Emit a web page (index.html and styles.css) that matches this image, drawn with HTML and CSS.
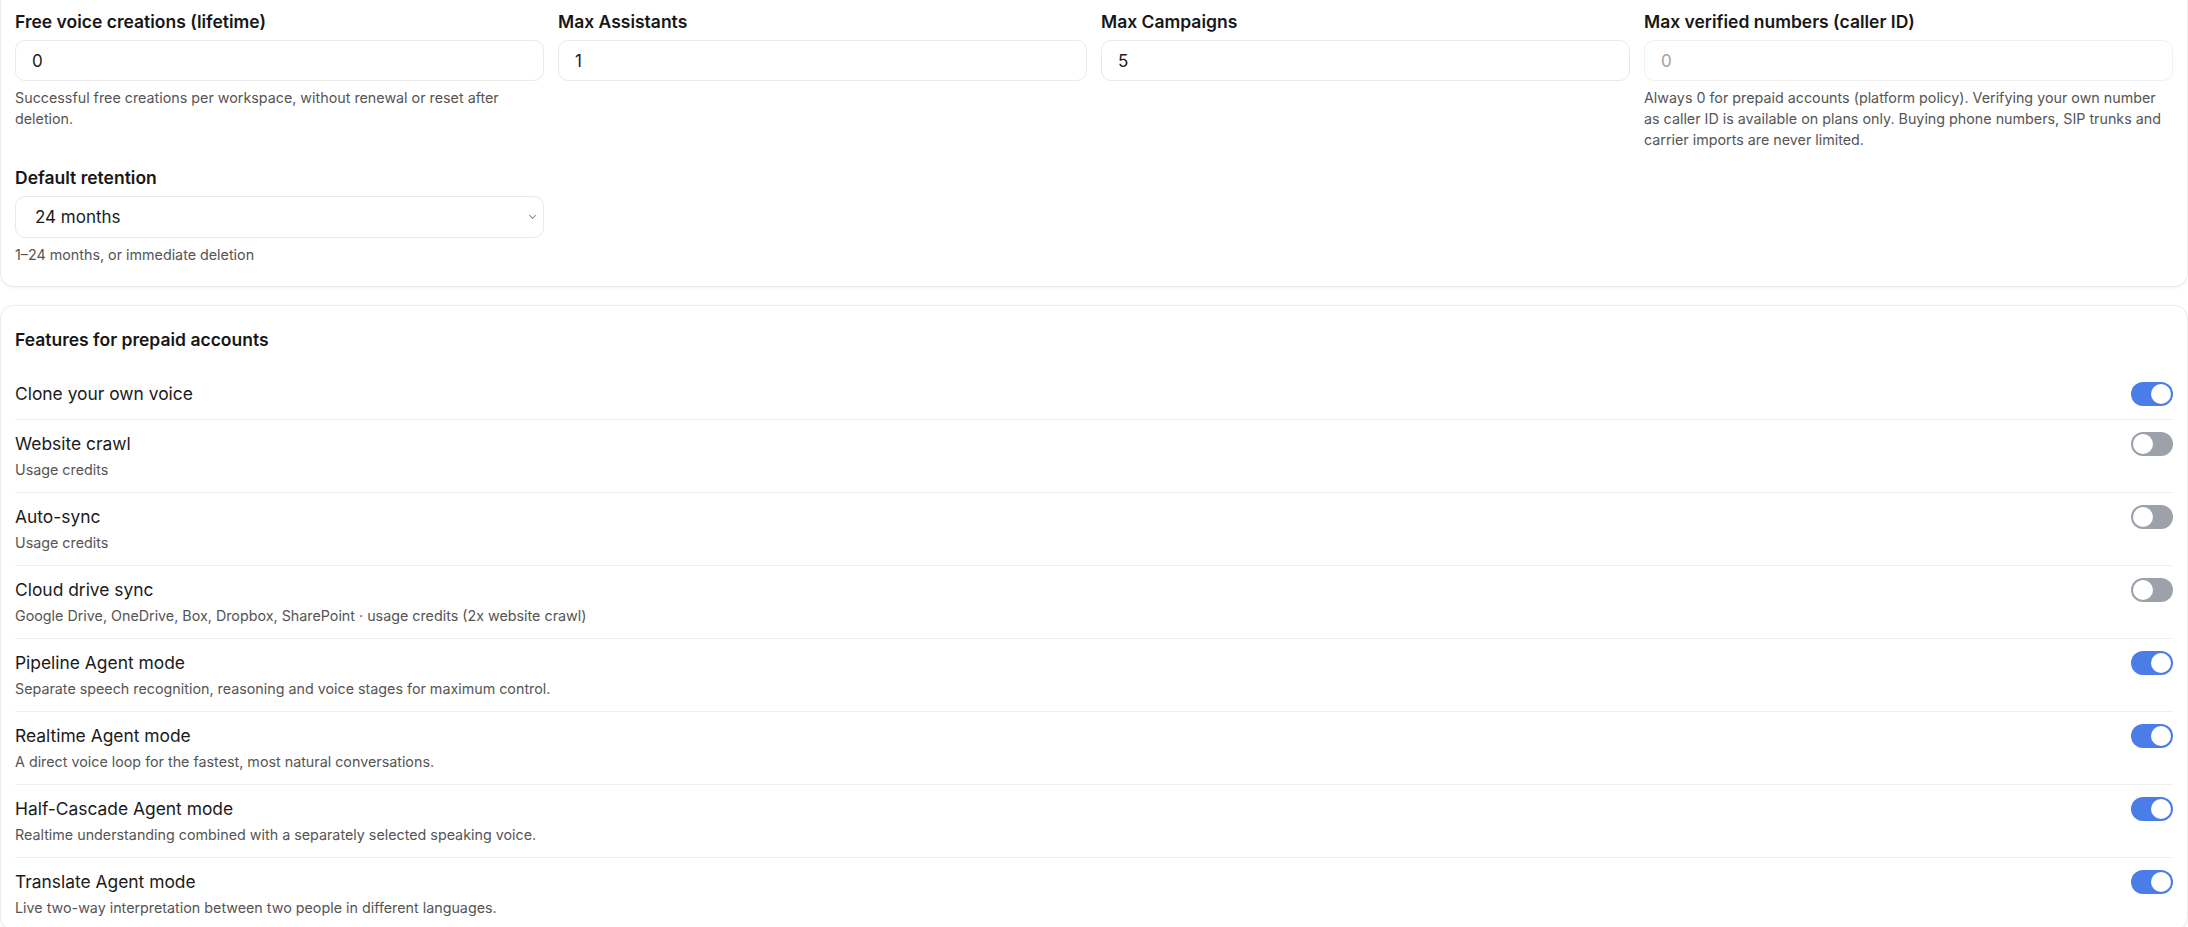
FILE: index.html
```html
<!DOCTYPE html>
<html lang="en">
<head>
  <meta charset="UTF-8">
  <meta name="viewport" content="width=device-width, initial-scale=1.0">
  <link rel="stylesheet" href="styles.css">
  <title>Prepaid account limits</title>
</head>
<body>

<main class="page">

  <section class="card card-limits">
    <div class="limits-grid">
      <div class="field">
        <label class="field-label" for="freeVoices">Free voice creations (lifetime)</label>
        <input class="field-input" type="number" id="freeVoices" value="0">
        <p class="field-help">Successful free creations per workspace, without renewal or reset after deletion.</p>
      </div>

      <div class="field">
        <label class="field-label" for="maxAssistants">Max Assistants</label>
        <input class="field-input" type="number" id="maxAssistants" value="1">
      </div>

      <div class="field">
        <label class="field-label" for="maxCampaigns">Max Campaigns</label>
        <input class="field-input" type="number" id="maxCampaigns" value="5">
      </div>

      <div class="field">
        <label class="field-label" for="maxCallerIds">Max verified numbers (caller ID)</label>
        <input class="field-input" type="number" id="maxCallerIds" value="0" disabled>
        <p class="field-help">Always 0 for prepaid accounts (platform policy). Verifying your own number as caller ID is available on plans only. Buying phone numbers, SIP trunks and carrier imports are never limited.</p>
      </div>

      <div class="field">
        <label class="field-label" for="retention">Default retention</label>
        <div class="select-wrap">
          <select class="field-input field-select" id="retention">
            <option>Immediate deletion</option>
            <option>1 month</option>
            <option>3 months</option>
            <option>6 months</option>
            <option>12 months</option>
            <option selected>24 months</option>
          </select>
        </div>
        <p class="field-help">1–24 months, or immediate deletion</p>
      </div>
    </div>
  </section>

  <section class="card card-features">
    <h2 class="card-title">Features for prepaid accounts</h2>

    <ul class="feature-list">
      <li class="feature-row">
        <div class="feature-text">
          <span class="feature-name">Clone your own voice</span>
        </div>
        <label class="switch"><input type="checkbox" checked><span class="switch-track"></span></label>
      </li>
      <li class="feature-row">
        <div class="feature-text">
          <span class="feature-name">Website crawl</span>
          <span class="feature-note">Usage credits</span>
        </div>
        <label class="switch"><input type="checkbox"><span class="switch-track"></span></label>
      </li>
      <li class="feature-row">
        <div class="feature-text">
          <span class="feature-name">Auto-sync</span>
          <span class="feature-note">Usage credits</span>
        </div>
        <label class="switch"><input type="checkbox"><span class="switch-track"></span></label>
      </li>
      <li class="feature-row">
        <div class="feature-text">
          <span class="feature-name">Cloud drive sync</span>
          <span class="feature-note">Google Drive, OneDrive, Box, Dropbox, SharePoint · usage credits (2x website crawl)</span>
        </div>
        <label class="switch"><input type="checkbox"><span class="switch-track"></span></label>
      </li>
      <li class="feature-row">
        <div class="feature-text">
          <span class="feature-name">Pipeline Agent mode</span>
          <span class="feature-note">Separate speech recognition, reasoning and voice stages for maximum control.</span>
        </div>
        <label class="switch"><input type="checkbox" checked><span class="switch-track"></span></label>
      </li>
      <li class="feature-row">
        <div class="feature-text">
          <span class="feature-name">Realtime Agent mode</span>
          <span class="feature-note">A direct voice loop for the fastest, most natural conversations.</span>
        </div>
        <label class="switch"><input type="checkbox" checked><span class="switch-track"></span></label>
      </li>
      <li class="feature-row">
        <div class="feature-text">
          <span class="feature-name">Half-Cascade Agent mode</span>
          <span class="feature-note">Realtime understanding combined with a separately selected speaking voice.</span>
        </div>
        <label class="switch"><input type="checkbox" checked><span class="switch-track"></span></label>
      </li>
      <li class="feature-row">
        <div class="feature-text">
          <span class="feature-name">Translate Agent mode</span>
          <span class="feature-note">Live two-way interpretation between two people in different languages.</span>
        </div>
        <label class="switch"><input type="checkbox" checked><span class="switch-track"></span></label>
      </li>
    </ul>
  </section>

</main>

</body>
</html>
```

FILE: styles.css
```css
body {
  margin: 0;
  font-family: 'Inter', 'Noto Sans', sans-serif;
  background-color: #fff;
  color: #1b1b1b;
}

.page {
  display: flex;
  flex-direction: column;
  gap: 18px;
}

.card {
  background-color: #fff;
  border: 1px solid #ececec;
  border-radius: 14px;
  box-shadow: 0 1px 3px rgba(0, 0, 0, 0.05);
  padding: 0 14px;
}

.card-limits {
  border-top: none;
  border-radius: 0 0 14px 14px;
  padding-top: 10px;
  padding-bottom: 21px;
}

.limits-grid {
  display: grid;
  grid-template-columns: repeat(4, 1fr);
  column-gap: 14px;
  row-gap: 16px;
}

.field {
  display: flex;
  flex-direction: column;
}

.field-label {
  font-size: 17.5px;
  font-weight: 600;
  line-height: 24px;
  color: #171717;
  margin-bottom: 6px;
}

.field-input {
  box-sizing: border-box;
  height: 41px;
  width: 100%;
  padding: 0 16px;
  font-family: inherit;
  font-size: 17px;
  color: #1b1b1b;
  background-color: #fff;
  border: 1px solid #e9e9e9;
  border-radius: 10px;
  outline: none;
}

.field-input:disabled {
  color: #a3a3a3;
  border-color: #f1f1f1;
}

.field-input::-webkit-inner-spin-button,
.field-input::-webkit-outer-spin-button {
  -webkit-appearance: none;
  margin: 0;
}

.select-wrap {
  position: relative;
}

.field-select {
  -webkit-appearance: none;
  appearance: none;
  height: 42px;
  padding-left: 19px;
}

.select-wrap::after {
  content: "";
  position: absolute;
  right: 9px;
  top: 17px;
  width: 4px;
  height: 4px;
  border-right: 1.2px solid #8a8a8a;
  border-bottom: 1.2px solid #8a8a8a;
  transform: rotate(45deg);
  pointer-events: none;
}

.field-help {
  margin: 6px 0 0;
  font-size: 14.3px;
  line-height: 21px;
  color: #555;
}

.card-features {
  padding-top: 22px;
}

.card-title {
  margin: 0 0 18px;
  font-size: 17.5px;
  font-weight: 600;
  line-height: 24px;
  color: #171717;
}

.feature-list {
  list-style: none;
  margin: 0;
  padding: 0;
}

.feature-row {
  display: flex;
  justify-content: space-between;
  align-items: flex-start;
  padding: 11px 0 12px;
  border-bottom: 1px solid #efefef;
}

.feature-row:last-child {
  border-bottom: none;
}

.feature-text {
  display: flex;
  flex-direction: column;
  gap: 3px;
}

.feature-name {
  font-size: 17.4px;
  line-height: 26px;
  color: #1b1b1b;
}

.feature-note {
  font-size: 14.3px;
  line-height: 20px;
  color: #555;
}

.switch {
  display: block;
  margin-top: 1px;
  cursor: pointer;
}

.switch input {
  display: none;
}

.switch-track {
  display: block;
  position: relative;
  width: 42px;
  height: 24px;
  border-radius: 12px;
  background-color: #9ca1aa;
  transition: background-color 0.2s;
}

.switch-track::after {
  content: "";
  position: absolute;
  top: 2px;
  left: 2px;
  width: 20px;
  height: 20px;
  border-radius: 50%;
  background-color: #fff;
  transition: left 0.2s;
}

.switch input:checked + .switch-track {
  background-color: #4a7de8;
}

.switch input:checked + .switch-track::after {
  left: 20px;
}
```
